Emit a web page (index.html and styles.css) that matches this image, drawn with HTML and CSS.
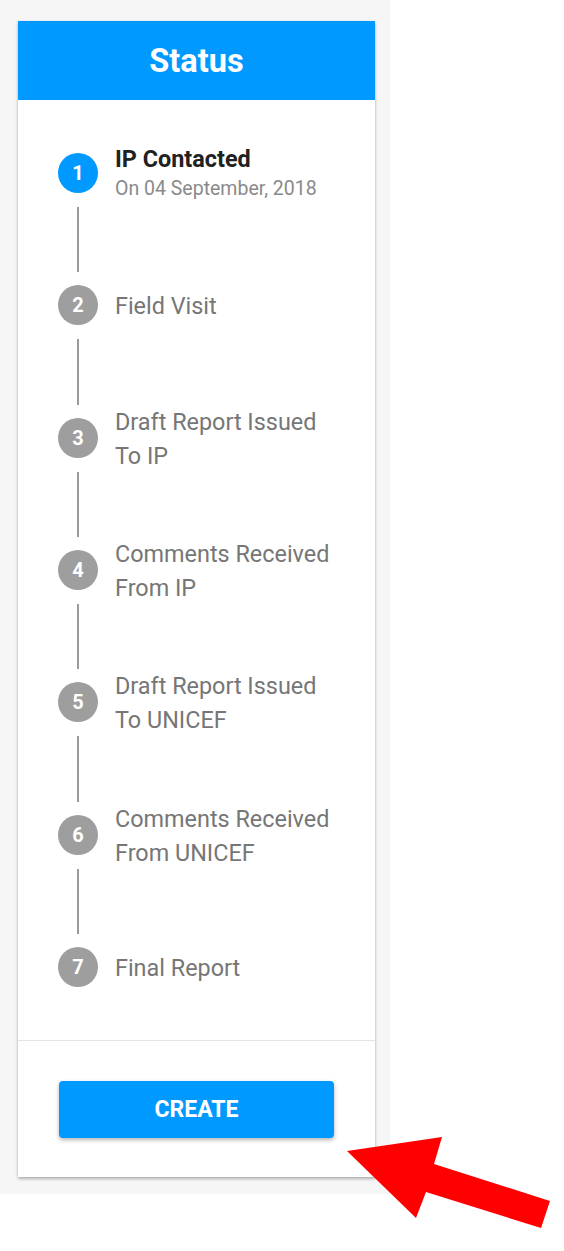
FILE: index.html
```html
<!doctype html>
<html lang="en">
<head>
    <meta charset="UTF-8" />
    <title>Status</title>
    <link rel="stylesheet" href="styles.css">
</head>
<body>

<div class="sidebar">
	<div class="status-card">
		<div class="status-header">Status</div>

		<div class="steps">
			<div class="step active">
				<span class="step-num">1</span>
				<div class="step-text">
					<div class="step-title">IP Contacted</div>
					<div class="step-date">On 04 September, 2018</div>
				</div>
			</div>
			<div class="connector"></div>

			<div class="step">
				<span class="step-num">2</span>
				<div class="step-text"><div class="step-title">Field Visit</div></div>
			</div>
			<div class="connector"></div>

			<div class="step">
				<span class="step-num">3</span>
				<div class="step-text"><div class="step-title">Draft Report Issued<br>To IP</div></div>
			</div>
			<div class="connector"></div>

			<div class="step">
				<span class="step-num">4</span>
				<div class="step-text"><div class="step-title">Comments Received<br>From IP</div></div>
			</div>
			<div class="connector"></div>

			<div class="step">
				<span class="step-num">5</span>
				<div class="step-text"><div class="step-title">Draft Report Issued<br>To UNICEF</div></div>
			</div>
			<div class="connector"></div>

			<div class="step">
				<span class="step-num">6</span>
				<div class="step-text"><div class="step-title">Comments Received<br>From UNICEF</div></div>
			</div>
			<div class="connector"></div>

			<div class="step">
				<span class="step-num">7</span>
				<div class="step-text"><div class="step-title">Final Report</div></div>
			</div>
		</div>

		<div class="status-footer">
			<button class="create-btn">Create</button>
		</div>
	</div>
</div>

<!-- red pointer drawn on top of the page -->
<svg class="pointer" width="564" height="1251" viewBox="0 0 564 1251">
	<polygon fill="#ff0000" points="347,1151 442,1137 434,1164 550,1201 541,1228 426,1192 416,1218" />
</svg>

</body>
</html>
```

FILE: styles.css
```css
body {
	margin: 0;
	background: #ffffff;
	font-family: Roboto, "Noto Sans", sans-serif;
}

.sidebar {
	width: 390px;
	height: 1194px;
	box-sizing: border-box;
	padding: 21px 15px 17px 18px;
	background: #f6f6f6;
}

.status-card {
	background: #ffffff;
	box-shadow: 0 2px 3px rgba(0, 0, 0, 0.28), 0 0 2px rgba(0, 0, 0, 0.08);
}

.status-header {
	height: 79px;
	display: flex;
	align-items: center;
	justify-content: center;
	background: #0099ff;
	color: #ffffff;
	font-size: 32.5px;
	font-weight: bold;
}

.steps {
	padding: 53px 0 53px 40px;
}

.step {
	height: 40px;
	display: flex;
	align-items: center;
	gap: 17px;
}

.step-num {
	flex: none;
	width: 40px;
	height: 40px;
	border-radius: 50%;
	background: #9e9e9e;
	color: #ffffff;
	font-size: 20px;
	font-weight: bold;
	display: flex;
	align-items: center;
	justify-content: center;
}

.step.active .step-num {
	background: #0099ff;
}

.step-text {
	padding-top: 2px;
}

.step-title {
	font-size: 23.4px;
	line-height: 34px;
	color: #767676;
}

.step.active .step-title {
	color: #212121;
	font-weight: bold;
	line-height: 30px;
}

.step-date {
	font-size: 19.5px;
	line-height: 30px;
	color: #8a8a8a;
}

.connector {
	width: 2px;
	height: 65.35px;
	margin: 14px 0 13px 19px;
	background: #9a9a9a;
}

.status-footer {
	border-top: 1px solid #e4e4e4;
	padding: 40px 0 39px 41px;
}

.create-btn {
	display: block;
	width: 275px;
	height: 57px;
	border: none;
	border-radius: 4px;
	background: #0099ff;
	color: #ffffff;
	font-family: Roboto, "Noto Sans", sans-serif;
	font-size: 23px;
	font-weight: bold;
	text-transform: uppercase;
	box-shadow: 0 2px 4px rgba(0, 0, 0, 0.3);
}

.pointer {
	position: absolute;
	left: 0;
	top: 0;
	pointer-events: none;
}
```
